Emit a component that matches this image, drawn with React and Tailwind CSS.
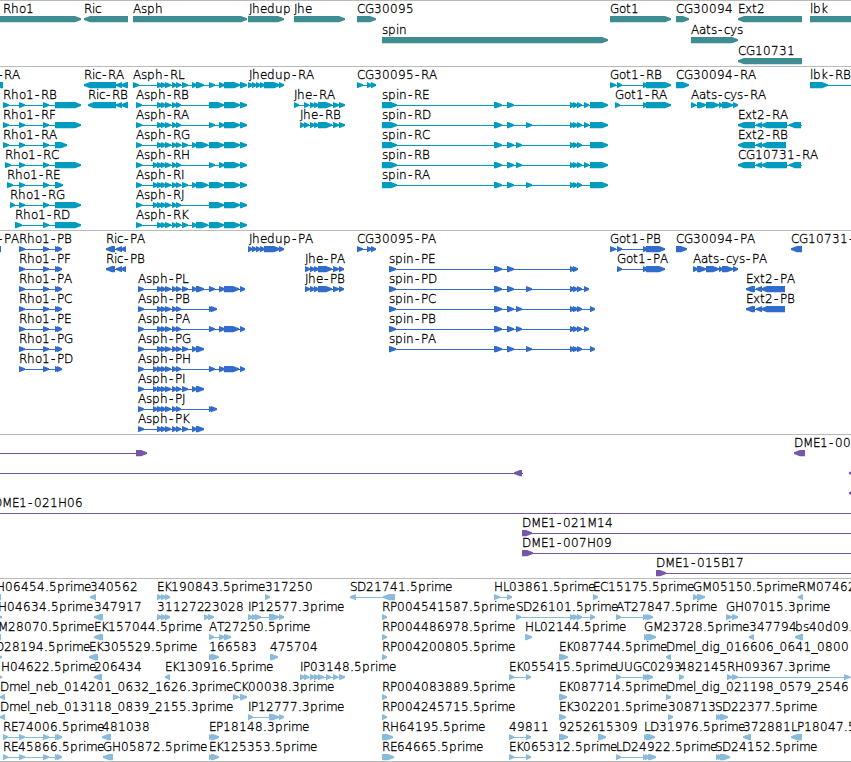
const WIDTH = 851;

// pixel advance of every glyph that appears in a label
const advances = {
  A: 8, B: 7, C: 8, D: 9, E: 7, G: 9, H: 9, I: 3, J: 3, K: 7, L: 6, M: 10, P: 7, R: 8, S: 7, T: 7, U: 9,
  a: 7, b: 8, c: 6, d: 8, e: 7, g: 8, h: 8, i: 3, k: 7, l: 3, m: 11, n: 8, o: 7, p: 8, r: 5, s: 6, t: 5,
  u: 8, x: 7, y: 7, '.': 4, '-': 7, _: 5.5
};

const glyphPositions = (text, x) => {
  let pos = x;
  return [...text].map(c => {
    // the hyphen is narrower than its cell, so it is centred
    const at = c === '-' ? pos + 1 : pos;
    pos += advances[c] ?? 8;
    return at;
  }).join(' ');
};

// feature: [row, label, label x, exons, options]
const genes = [
  [0, 'Rho1', 3, [[-20, 81]]],
  [0, 'Ric', 84, [[84, 128]], { rev: true }],
  [0, 'Asph', 133, [[133, 247]]],
  [0, 'Jhedup', 249, [[248, 284]]],
  [0, 'Jhe', 294, [[294, 345]]],
  [0, 'CG30095', 357, [[357, 376]]],
  [1, 'spin', 382, [[382, 608]]],
  [0, 'Got1', 610, [[610, 671]]],
  [0, 'CG30094', 676, [[676, 689]]],
  [1, 'Aats-cys', 691, [[691, 738]]],
  [0, 'Ext2', 738, [[738, 802]], { rev: true }],
  [2, 'CG10731', 738, [[738, 802]], { rev: true }],
  [0, 'lbk', 810, [[810, 870]]]
];

const a3 = [[157, 163], [161, 166], [165, 171], [172, 177], [176, 181]];
const a4 = [[153, 158], ...a3];
const aEnd = [[224, 240], [240, 247]];
const aMid = [[209, 224], ...aEnd];
const aThin = [[209, 215], [219, 225], ...aEnd];
const aLoop = [[182, 188], [192, 197], [196, 208]];
const rhoMid = [[19, 25], [43, 49]];
const jheEnd = [[310, 315], [314, 319], [318, 332], [333, 339], [339, 345]];
const jhedup = [[248, 253], [252, 257], [256, 261], [260, 265], [264, 280], [279, 284]];
const spin3 = [[570, 575], [573, 578], [577, 582]];
const spinStart = [[494, 502], [507, 514]];
const ext2 = [[756, 762], [761, 787]];

const transcripts = [
  [0, '-RA', -3, [[-10, 3]], { rev: true }],
  [0, 'Ric-RA', 84, [[84, 116], [116, 122], [121, 128]], { rev: true }],
  [0, 'Asph-RL', 133, [[133, 139], ...a3, [182, 188], [192, 197], [196, 204], ...aThin]],
  [0, 'Jhedup-RA', 249, jhedup],
  [0, 'CG30095-RA', 357, [[357, 363], [367, 372], [371, 376]]],
  [0, 'Got1-RB', 610, [[610, 616], [617, 622], [643, 648], [646, 671]]],
  [0, 'CG30094-RA', 676, [[676, 689]]],
  [0, 'lbk-RB', 810, [[810, 828]], { to: WIDTH }],
  [1, 'Rho1-RB', 3, [[3, 9], ...rhoMid, [55, 81]]],
  [1, 'Ric-RB', 88, [[88, 116], [116, 122], [121, 128]], { rev: true }],
  [1, 'Asph-RB', 136, [[136, 142], ...a3, ...aMid]],
  [1, 'Jhe-RA', 294, [[294, 299], [304, 309], ...jheEnd]],
  [1, 'spin-RE', 382, [[382, 397], ...spinStart, ...spin3, [584, 589], [590, 608]]],
  [1, 'Got1-RA', 615, [[615, 620], [643, 648], [646, 671]]],
  [1, 'Aats-cys-RA', 691, [[691, 696], [697, 706], [706, 719], [719, 723], [722, 733], [733, 738]]],
  [2, 'Rho1-RF', 3, [[3, 9], ...rhoMid, [55, 81]]],
  [2, 'Asph-RA', 136, [[136, 142], ...a3, ...aThin]],
  [2, 'Jhe-RB', 300, [[300, 305], [304, 309], ...jheEnd]],
  [2, 'spin-RD', 382, [[382, 397], ...spinStart, [526, 532], ...spin3, [584, 589], [590, 608]]],
  [2, 'Ext2-RA', 738, [[738, 755], ...ext2, [789, 801]], { rev: true, to: 802 }],
  [3, 'Rho1-RA', 3, [[3, 9], ...rhoMid, [55, 67]]],
  [3, 'Asph-RG', 136, [[136, 142], ...a3, ...aLoop, ...aMid]],
  [3, 'spin-RC', 382, [[382, 397], ...spinStart, [516, 522], ...spin3, [590, 608]]],
  [3, 'Ext2-RB', 738, [[738, 755], [756, 762], [761, 786]], { rev: true }],
  [4, 'Rho1-RC', 5, [[5, 11], ...rhoMid, [55, 81]]],
  [4, 'Asph-RH', 136, [[136, 142], ...a4, ...aThin]],
  [4, 'spin-RB', 382, [[382, 397], ...spinStart, [516, 522], ...spin3, [584, 589], [590, 608]]],
  [4, 'CG10731-RA', 738, [[738, 755], ...ext2, [789, 801]], { rev: true, to: 802 }],
  [5, 'Rho1-RE', 7, [[7, 13], ...rhoMid, [55, 63]]],
  [5, 'Asph-RI', 136, [[136, 142], ...a4, ...aLoop, ...aMid]],
  [5, 'spin-RA', 382, [[382, 397], ...spinStart, [526, 532], ...spin3, [590, 608]]],
  [6, 'Rho1-RG', 10, [[10, 15], ...rhoMid, [55, 81]]],
  [6, 'Asph-RJ', 136, [[136, 142], ...a4, ...aMid]],
  [7, 'Rho1-RD', 15, [[15, 22], [43, 49], [55, 81]]],
  [7, 'Asph-RK', 136, [[136, 142], ...a3, ...aLoop, ...aMid]]
];

const rhoP = [[19, 25], [43, 49], [55, 60], [57, 62]];
const jheP = [[305, 310], [310, 315], [314, 319], [318, 332], [333, 339], [339, 344]];
const pStart = [[138, 144]];
const pShort = [[182, 188], [192, 197], [196, 204]];
const pLong = [[209, 215], [219, 225], [224, 239], [240, 245]];
const pStop = [[209, 214], [211, 217]];
const ext2P = [[746, 755], [756, 762], [761, 785]];

const proteins = [
  [0, '-PA', -3, [[-10, 1]], { rev: true }],
  [0, 'Rho1-PB', 19, rhoP],
  [0, 'Ric-PA', 106, [[106, 115], [116, 122], [121, 126]], { rev: true }],
  [0, 'Jhedup-PA', 249, jhedup],
  [0, 'CG30095-PA', 357, [[357, 363], [367, 372], [371, 376]]],
  [0, 'Got1-PB', 610, [[610, 616], [617, 622], [643, 648], [646, 665]]],
  [0, 'CG30094-PA', 676, [[676, 687]]],
  [0, 'CG10731-', 791, [[791, 802]], { rev: true }],
  [1, 'Rho1-PF', 19, rhoP],
  [1, 'Ric-PB', 106, [[106, 115], [116, 122], [121, 126]], { rev: true }],
  [1, 'Jhe-PA', 305, jheP],
  [1, 'spin-PE', 389, [[389, 396], ...spinStart, [570, 575], [573, 578]]],
  [1, 'Got1-PA', 617, [[617, 622], [643, 648], [646, 665]]],
  [1, 'Aats-cys-PA', 693, [[693, 698], [697, 706], [706, 719], [719, 723], [722, 733], [733, 738]]],
  [2, 'Rho1-PA', 19, rhoP],
  [2, 'Asph-PL', 138, [...pStart, ...a3, ...pShort, ...pLong]],
  [2, 'Jhe-PB', 305, jheP],
  [2, 'spin-PD', 389, [[389, 396], ...spinStart, [526, 532], ...spin3, [584, 589]]],
  [2, 'Ext2-PA', 746, ext2P, { rev: true }],
  [3, 'Rho1-PC', 19, rhoP],
  [3, 'Asph-PB', 138, [...pStart, ...a3, ...pStop]],
  [3, 'spin-PC', 389, [[389, 396], ...spinStart, [516, 522], ...spin3, [590, 595]]],
  [3, 'Ext2-PB', 746, ext2P, { rev: true }],
  [4, 'Rho1-PE', 19, rhoP],
  [4, 'Asph-PA', 138, [...pStart, ...a3, ...pLong]],
  [4, 'spin-PB', 389, [[389, 396], ...spinStart, [516, 522], ...spin3, [584, 589]]],
  [5, 'Rho1-PG', 19, rhoP],
  [5, 'Asph-PG', 138, [...pStart, ...a3, ...pShort]],
  [5, 'spin-PA', 389, [[389, 396], ...spinStart, [526, 532], ...spin3, [590, 595]]],
  [6, 'Rho1-PD', 19, rhoP],
  [6, 'Asph-PH', 138, [...pStart, ...a4, ...pLong]],
  [7, 'Asph-PI', 138, [...pStart, ...a4, ...pShort]],
  [8, 'Asph-PJ', 138, [...pStart, ...a4, ...pStop]],
  [9, 'Asph-PK', 138, [...pStart, ...a3, ...pShort]]
];

const clones = [
  [0, '', 0, [[136, 147]], { from: 0 }],
  [0, 'DME1-00', 794, [[794, 805]], { rev: true }],
  [1, '', 0, [[514, 522]], { rev: true, from: 0, to: 523 }],
  [1, '', 0, [[849, 858]], { rev: true }],
  [2, '', 0, [[849, 858]], { rev: true }],
  [3, 'DME1-021H06', -7, [], { from: 0, to: WIDTH }],
  [4, 'DME1-021M14', 522, [[522, 532]], { to: WIDTH }],
  [5, 'DME1-007H09', 522, [[522, 533]], { to: WIDTH }],
  [6, 'DME1-015B17', 656, [[656, 666]], { to: WIDTH }]
];

const rhoEst = [[3, 8], [19, 25], [43, 49], [55, 60], [57, 62]];
const gotEst = [[616, 621], [643, 647], [645, 649], [647, 653]];
const est3 = [[157, 162], [161, 166], [165, 170]];
const sdEst = [[716, 720], [718, 722], [720, 728]];

const ests = [
  [0, 'H06454.5prime', -4, [[-8, 1]], { rev: true }],
  [0, '340562', 90, [[90, 96]], { rev: true }],
  [0, 'EK190843.5prime', 157, est3],
  [0, '317250', 265, [[265, 270]]],
  [0, 'SD21741.5prime', 350, [[350, 356], [383, 395]], { rev: true }],
  [0, 'HL03861.5prime', 494, [[494, 500], [507, 512]]],
  [0, 'EC15175.5prime', 593, [[593, 598]]],
  [0, 'GM05150.5prime', 693, [[693, 698], [697, 705]]],
  [0, 'RM07462', 798, [[798, 803]], { rev: true }],
  [1, 'H04634.5prime', -2, [[-8, 2]]],
  [1, '347917', 94, [[94, 103]], { rev: true }],
  [1, '311272', 157, est3],
  [1, '23028', 204, [[204, 209], [208, 214]]],
  [1, 'IP12577.3prime', 248, [[248, 253], [252, 257], [255, 261], [269, 279], [279, 284]]],
  [1, 'RP004541587.5prime', 382, [[382, 387]]],
  [1, 'SD26101.5prime', 516, [[516, 521], [570, 575], [573, 578], [577, 582], [590, 595]]],
  [1, 'AT27847.5prime', 616, gotEst],
  [1, 'GH07015.3prime', 726, [[726, 732], [732, 738]]],
  [2, 'M28070.5prime', -2, [[-8, 1]], { rev: true }],
  [2, 'EK157044.5prime', 94, [[94, 103]], { rev: true }],
  [2, 'AT27250.5prime', 209, [[209, 214], [219, 225], [224, 231]]],
  [2, 'RP004486978.5prime', 382, [[382, 387]]],
  [2, 'HL02144.5prime', 525, [[525, 532]]],
  [2, 'GM23728.5prime', 644, [[644, 648], [646, 656]]],
  [2, '347794', 749, [[749, 754]], { rev: true }],
  [2, 'bs40d09.', 795, [[795, 803]], { rev: true }],
  [3, 'D28194.5prime', -5, [[-8, 2]]],
  [3, 'EK305529.5prime', 89, [[89, 98]], { rev: true }],
  [3, '166583', 209, [[209, 214], [211, 219]]],
  [3, '475704', 270, [[270, 278]]],
  [3, 'RP004200805.5prime', 382, [[382, 387]]],
  [3, 'EK087744.5prime', 559, [[559, 568]]],
  [3, 'Dmel_dig_016606_0641_0800', 666, [[666, 671]], { rev: true }],
  [4, 'H04622.5prime', 1, [[-8, 2]]],
  [4, '206434', 94, [[94, 102]], { rev: true }],
  [4, 'EK130916.5prime', 165, [[165, 170]], { rev: true }],
  [4, 'IP03148.5prime', 300, [[300, 305], [304, 309], [310, 315], [314, 319], [318, 324], [326, 331], [333, 338], [339, 345]]],
  [4, 'EK055415.5prime', 509, [[509, 514], [526, 531]]],
  [4, 'UUGC0293', 615, gotEst],
  [4, '482145', 679, [[679, 684]]],
  [4, 'RH09367.3prime', 727, [[727, 732], [732, 738], [844, 850]], { to: WIDTH }],
  [5, 'Dmel_neb_014201_0632_1626.3prime', 0, [[0, 5]], { rev: true }],
  [5, 'CK00038.3prime', 233, [[233, 239], [240, 247]]],
  [5, 'RP004083889.5prime', 382, [[382, 387]]],
  [5, 'EK087714.5prime', 559, [[559, 567]]],
  [5, 'Dmel_dig_021198_0579_2546', 666, [[666, 671]]],
  [6, 'Dmel_neb_013118_0839_2155.3prime', 0, [[0, 5]], { rev: true }],
  [6, 'IP12777.3prime', 248, [[248, 253], [269, 279], [279, 284]]],
  [6, 'RP004245715.5prime', 382, [[382, 387]]],
  [6, 'EK302201.5prime', 559, [[559, 566]]],
  [6, '308713', 668, [[668, 673]]],
  [6, 'SD22377.5prime', 715, sdEst],
  [7, 'RE74006.5prime', 3, rhoEst],
  [7, '481038', 102, [[102, 111]], { rev: true }],
  [7, 'EP18148.3prime', 209, [[209, 213], [211, 219]]],
  [7, 'RH64195.5prime', 382, [[382, 393]]],
  [7, '49811', 509, [[509, 514], [526, 531]]],
  [7, '92526', 559, [[559, 568]]],
  [7, '15309', 598, [[598, 606]]],
  [7, 'LD31976.5prime', 644, [[644, 648], [646, 655]]],
  [7, '372881', 743, [[743, 751]], { rev: true }],
  [7, 'LP18047.5', 791, [[791, 802]], { rev: true }],
  [8, 'RE45866.5prime', 3, rhoEst],
  [8, 'GH05872.5prime', 103, [[103, 113]], { rev: true }],
  [8, 'EK125353.5prime', 209, [[209, 213], [211, 219]]],
  [8, 'RE64665.5prime', 382, [[382, 394]]],
  [8, 'EK065312.5prime', 509, [[509, 514], [526, 531]]],
  [8, 'LD24922.5prime', 616, [[616, 621], [643, 647], [645, 650], [648, 656]]],
  [8, 'SD24152.5prime', 715, [...sdEst, [722, 730]]]
];

// baseline and bar top of the first row, from the rule above the track
const BASELINE = 12;
const BAR_TOP = 15;

const tracks = [
  { id: 'genes', color: '#3f8c92', height: 66, rowHeight: 21, features: genes },
  { id: 'transcripts', color: '#009cbf', height: 164, rowHeight: 20, features: transcripts },
  { id: 'proteins', color: '#316bcb', height: 204, rowHeight: 20, features: proteins },
  { id: 'clones', color: '#7457a6', height: 144, rowHeight: 20, features: clones },
  { id: 'ests', color: '#88bbdc', height: 184, rowHeight: 20, features: ests }
];

function Exon({ start, end, y, rev }) {
  const head = Math.min(6, end - start);
  const tip = rev ? start : end;
  const neck = rev ? start + head : end - head;
  const tail = rev ? end : start;
  return (
    <polygon
      points={`${tail},${y} ${neck},${y} ${tip},${y + 2.3} ${tip},${y + 3.9} ${neck},${y + 6.2} ${tail},${y + 6.2}`}
    />
  );
}

function Feature({ feature, track }) {
  const [row, label, x, exons, options = {}] = feature;
  const y = BAR_TOP + row * track.rowHeight;
  const from = options.from ?? exons[0][0];
  const to = options.to ?? exons[exons.length - 1][1];

  return (
    <g>
      {(exons.length > 1 || options.from !== undefined || options.to !== undefined) && (
        <rect x={from} y={y + 3} width={to - from} height="1" shapeRendering="crispEdges" />
      )}
      {exons.map(([start, end], i) => (
        <Exon key={i} start={start} end={end} y={y} rev={options.rev} />
      ))}
      {label && (
        <text
          x={glyphPositions(label, x)}
          y={BASELINE + row * track.rowHeight}
          className="fill-black stroke-black stroke-[0.3px]"
        >
          {label}
        </text>
      )}
    </g>
  );
}

function Track({ track }) {
  return (
    <section className="border-t border-[#bababa]">
      <svg
        width={WIDTH}
        height={track.height - 1}
        fill={track.color}
        className="block overflow-hidden font-['DejaVu_Sans',sans-serif] text-[12px] font-extralight"
      >
        {track.features.map((feature, i) => (
          <Feature key={i} feature={feature} track={track} />
        ))}
      </svg>
    </section>
  );
}

export default function App() {
  return (
    <main className="flex h-[762px] w-[851px] flex-col overflow-hidden border-b border-[#bababa] bg-white">
      {tracks.map(track => (
        <Track key={track.id} track={track} />
      ))}
    </main>
  );
}
